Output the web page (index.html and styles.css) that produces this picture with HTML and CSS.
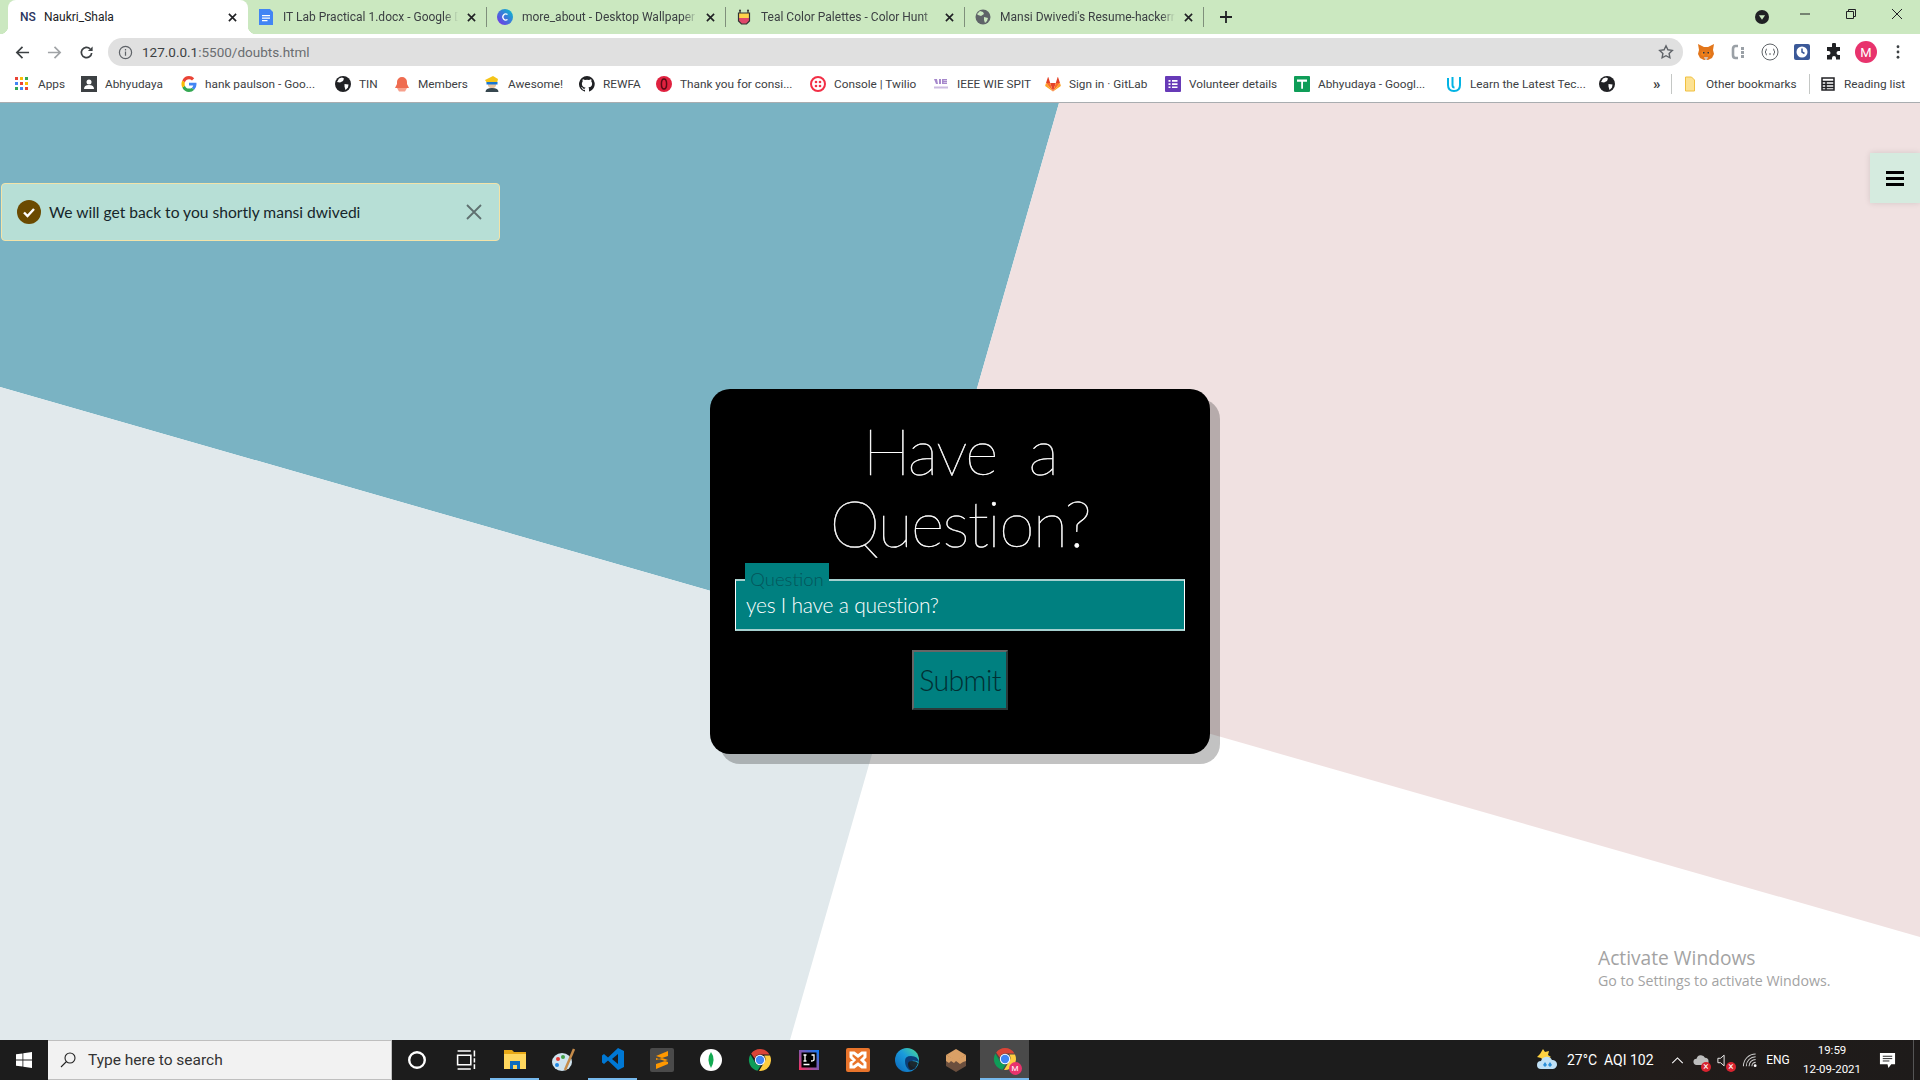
FILE: index.html
```html
<!DOCTYPE html>
<html lang="en">
<head>
<meta charset="utf-8">
<title>Naukri_Shala</title>
<link rel="stylesheet" href="styles.css">
</head>
<body>
<header class="browser">
  <div class="tabstrip">
    <div class="tab active">
      <span class="fav ns">NS</span><span class="tab-title">Naukri_Shala</span>
      <svg class="tab-x" viewBox="0 0 10 10"><path d="M1 1l8 8M9 1l-8 8"/></svg>
    </div>
    <div class="tab">
      <svg class="fav" viewBox="0 0 16 16"><path fill="#4285f4" d="M1 0h11l3 3v13H1z"/><path fill="#fff" d="M4 6h8v1.300H4zM4 8.500h8v1.300H4zM4 11h5.500v1.300H4z"/></svg>
      <span class="tab-title">IT Lab Practical 1.docx - Google D</span>
      <svg class="tab-x" viewBox="0 0 10 10"><path d="M1 1l8 8M9 1l-8 8"/></svg>
    </div>
    <div class="tab">
      <svg class="fav" viewBox="0 0 16 16"><defs><linearGradient id="cv" x1="0" y1="1" x2="1" y2="0"><stop offset="0" stop-color="#7d2ae8"/><stop offset="1" stop-color="#00c4cc"/></linearGradient></defs><circle cx="8" cy="8" r="8" fill="url(#cv)"/><path d="M10.500 5.500a3 3 0 1 0 0 5" fill="none" stroke="#fff" stroke-width="1.300"/></svg>
      <span class="tab-title">more_about - Desktop Wallpaper</span>
      <svg class="tab-x" viewBox="0 0 10 10"><path d="M1 1l8 8M9 1l-8 8"/></svg>
    </div>
    <div class="tab">
      <svg class="fav" viewBox="0 0 16 16"><path fill="#ffd24a" d="M2.500 4h11v5h-11z"/><path fill="#e0486a" d="M2.500 9h11v3l-3 3h-5l-3-3z"/><path fill="none" stroke="#333" stroke-width="1.200" d="M2.500 4h11v8l-3 3h-5l-3-3zM4 4V1.500M12 4V1.500"/><circle cx="4" cy="1.500" r="1" fill="#333"/><circle cx="12" cy="1.500" r="1" fill="#333"/></svg>
      <span class="tab-title">Teal Color Palettes - Color Hunt</span>
      <svg class="tab-x" viewBox="0 0 10 10"><path d="M1 1l8 8M9 1l-8 8"/></svg>
    </div>
    <div class="tab">
      <svg class="fav" viewBox="0 0 16 16"><circle cx="8" cy="8" r="7.500" fill="#5f6368"/><path fill="#cbe8c0" d="M5 2l3 1 1 2-3 2-3-1-1-1zM9 8l4 1-1 3-2 2-1-3z"/></svg>
      <span class="tab-title">Mansi Dwivedi's Resume-hackerr</span>
      <svg class="tab-x" viewBox="0 0 10 10"><path d="M1 1l8 8M9 1l-8 8"/></svg>
    </div>
    <svg class="new-tab" viewBox="0 0 12 12"><path d="M6 0v12M0 6h12"/></svg>
    <div class="win-controls">
      <span class="win-cell caret-cell"><svg viewBox="0 0 16 16" class="caret"><circle cx="8" cy="8" r="8" fill="#202124"/><path d="M4.500 6h7L8 11z" fill="#cbe8c0"/></svg></span>
      <span class="win-cell"><svg viewBox="0 0 10 10" class="wc"><path d="M0 5h10"/></svg></span>
      <span class="win-cell"><svg viewBox="0 0 10 10" class="wc"><path d="M.5 2.500h7v7h-7zM2.500 2.500v-2h7v7h-2"/></svg></span>
      <span class="win-cell"><svg viewBox="0 0 10 10" class="wc"><path d="M0 0l10 10M10 0L0 10"/></svg></span>
    </div>
  </div>

  <div class="toolbar">
    <span class="nav-cell"><svg viewBox="0 0 16 16" class="nav-ic"><path d="M15 8H2M8 2L2 8l6 6"/></svg></span>
    <span class="nav-cell"><svg viewBox="0 0 16 16" class="nav-ic dim"><path d="M1 8h13M8 2l6 6-6 6"/></svg></span>
    <span class="nav-cell"><svg viewBox="0 0 16 16" class="nav-ic"><path d="M13.500 8.500a5.500 5.500 0 1 1-1.600-4.400"/><path class="solid" d="M14.500 1.500v5h-5z"/></svg></span>
    <div class="address">
      <svg viewBox="0 0 16 16" class="info"><circle cx="8" cy="8" r="6.500"/><path d="M8 7v4.500M8 4.300v1.500"/></svg>
      <span class="url"><span class="url-host">127.0.0.1</span>:5500/doubts.html</span>
      <svg viewBox="0 0 16 16" class="star"><path d="M8 1.800l1.900 4 4.400.6-3.200 3 .8 4.400L8 11.700l-3.900 2.100.8-4.400-3.200-3 4.400-.6z"/></svg>
    </div>
    <div class="extensions">
      <span class="ext-cell"><svg viewBox="0 0 18 18" class="ext"><path fill="#e2761b" d="M1 1l6 3h4l6-3-1 6 1 4-2 4-4 2H7l-4-2-2-4 1-4z"/><path fill="#f6851b" d="M5 8l3 2-1 3-3-1zM13 8l-3 2 1 3 3-1z"/><path fill="#233447" d="M6 9h1.500v1.500H6zM10.500 9H12v1.500h-1.500z"/><path fill="#d7c1b3" d="M7 14h4l-1 3H8z"/></svg></span>
      <span class="ext-cell"><svg viewBox="0 0 18 18" class="ext"><path fill="none" stroke="#9aa0a6" stroke-width="2.600" d="M9 3H6.500Q4 3 4 6v6q0 3 2.500 3H9"/><path fill="#9aa0a6" d="M12 4h3v3h-3zM12 8h3v3h-3zM12 12h3v3h-3z"/></svg></span>
      <span class="ext-cell"><svg viewBox="0 0 18 18" class="ext"><circle cx="9" cy="9" r="8" fill="#fff" stroke="#5f6368"/><path fill="none" stroke="#5f6368" d="M6 6q-1 0-1 1v1l-1 1 1 1v1q0 1 1 1M12 6q1 0 1 1v1l1 1-1 1v1q0 1-1 1M8 11h2"/></svg></span>
      <span class="ext-cell"><svg viewBox="0 0 18 18" class="ext"><rect x="1" y="1" width="16" height="16" rx="2" fill="#3b5998"/><circle cx="9" cy="9" r="5.500" fill="#fff"/><path d="M9 5.500V9l2.500 1.500" fill="none" stroke="#3b5998" stroke-width="1.500"/></svg></span>
      <span class="ext-cell"><svg viewBox="0 0 18 18" class="ext"><path fill="#202124" d="M7 1.500a2 2 0 0 1 4 0V4h4v4h-1.500a2 2 0 0 0 0 4H15v4.500H11V15a2 2 0 0 0-4 0v1.500H2V12h1.500a2 2 0 0 0 0-4H2V4h5z"/></svg></span>
      <span class="ext-cell"><span class="avatar">M</span></span>
      <span class="ext-cell"><svg viewBox="0 0 4 16" class="dots"><circle cx="2" cy="2" r="1.600"/><circle cx="2" cy="8" r="1.600"/><circle cx="2" cy="14" r="1.600"/></svg></span>
    </div>
  </div>

  <nav class="bookmarks">
    <a class="bm"><svg viewBox="0 0 16 16" class="bm-ic"><path fill="#ea4335" d="M1 1h3v3H1z"/><path fill="#fbbc05" d="M6 1h3v3H6z"/><path fill="#34a853" d="M11 1h3v3h-3z"/><path fill="#4285f4" d="M1 6h3v3H1z"/><path fill="#ea4335" d="M6 6h3v3H6z"/><path fill="#fbbc05" d="M11 6h3v3h-3z"/><path fill="#34a853" d="M1 11h3v3H1z"/><path fill="#4285f4" d="M6 11h3v3H6z"/><path fill="#ea4335" d="M11 11h3v3h-3z"/></svg><span>Apps</span></a>
    <a class="bm"><svg viewBox="0 0 16 16" class="bm-ic"><rect width="16" height="16" fill="#3c4043"/><circle cx="8" cy="6" r="2.500" fill="#fff"/><path fill="#fff" d="M3 13q0-4 5-4t5 4z"/></svg><span>Abhyudaya</span></a>
    <a class="bm"><svg viewBox="0 0 16 16" class="bm-ic"><path fill="#4285f4" d="M15.500 8.200q0-.8-.1-1.500H8v2.900h4.300q-.3 1.400-1.600 2.300l2.500 1.900q2.300-2.100 2.300-5.600z"/><path fill="#34a853" d="M8 16q3.200 0 5.200-2.200l-2.500-1.900q-1 .7-2.700.7-3 0-4.100-2.900L1.300 11.600Q3.400 16 8 16z"/><path fill="#fbbc05" d="M3.900 9.700Q3.400 8 3.900 6.300L1.300 4.400q-1.700 3.600 0 7.200z"/><path fill="#ea4335" d="M8 3.200q1.800 0 3 1.200l2.200-2.200Q11.200 0 8 0 3.400 0 1.300 4.400l2.600 1.900Q5 3.200 8 3.200z"/></svg><span>hank paulson - Goo...</span></a>
    <a class="bm"><svg viewBox="0 0 16 16" class="bm-ic"><use href="#globe"/></svg><span>TIN</span></a>
    <a class="bm"><svg viewBox="0 0 16 16" class="bm-ic"><path fill="#ef6c50" d="M8 1a5 5 0 0 1 5 5v2l2 4H1l2-4V6a5 5 0 0 1 5-5z"/><path fill="#f7a08c" d="M3 12h10l-2 3.500H5z"/></svg><span>Members</span></a>
    <a class="bm"><svg viewBox="0 0 16 16" class="bm-ic"><path fill="#f5c518" d="M1 4l8-4 5 3-1 4H3z"/><path fill="#e8c39e" d="M4 6h8v4l-2 2H6l-2-2z"/><path fill="#1976d2" d="M2.500 6h11v2.500h-11z"/><path fill="#37474f" d="M1.500 16q0-4 6.500-4t6.500 4z"/></svg><span>Awesome!</span></a>
    <a class="bm"><svg viewBox="0 0 16 16" class="bm-ic"><path fill="#202124" d="M8 0a8 8 0 0 0-2.500 15.600c.4.1.5-.2.500-.4v-1.400c-2.200.5-2.700-1-2.700-1-.4-.9-.9-1.200-.9-1.200-.7-.5.1-.5.1-.5.8.1 1.200.8 1.200.8.7 1.200 1.900.9 2.300.7.100-.5.300-.9.500-1.100-1.800-.2-3.600-.9-3.600-4 0-.9.300-1.600.8-2.100-.1-.2-.4-1 .1-2.100 0 0 .7-.2 2.200.8a7.500 7.500 0 0 1 4 0c1.500-1 2.200-.8 2.200-.8.400 1.100.2 1.900.1 2.100.5.600.8 1.300.8 2.100 0 3.100-1.900 3.700-3.700 3.900.3.300.6.800.6 1.500v2.200c0 .2.100.5.500.4A8 8 0 0 0 8 0z"/></svg><span>REWFA</span></a>
    <a class="bm"><svg viewBox="0 0 16 16" class="bm-ic"><circle cx="8" cy="8" r="8" fill="#e0213f"/><ellipse cx="8" cy="8" rx="2.600" ry="5" fill="none" stroke="#5a0a14" stroke-width="1.500"/></svg><span>Thank you for consi...</span></a>
    <a class="bm"><svg viewBox="0 0 16 16" class="bm-ic"><circle cx="8" cy="8" r="7" fill="none" stroke="#f22f46" stroke-width="2"/><g fill="#f22f46"><circle cx="6" cy="6" r="1.300"/><circle cx="10" cy="6" r="1.300"/><circle cx="6" cy="10" r="1.300"/><circle cx="10" cy="10" r="1.300"/></g></svg><span>Console | Twilio</span></a>
    <a class="bm"><svg viewBox="0 0 16 16" class="bm-ic"><path fill="#a688cc" d="M1 3h3l1 5H3zM6 3h2v5H6zM9 3h5v1.500h-3.500V5H14v1.300h-3.500v.4H14V8H9z"/><path fill="#cbbbe0" d="M1 10.500h14v2H1z"/></svg><span>IEEE WIE SPIT</span></a>
    <a class="bm"><svg viewBox="0 0 16 16" class="bm-ic"><path fill="#e24329" d="M8 15.500L5.200 7h5.600z"/><path fill="#fc6d26" d="M8 15.500L1 7h4.200zM8 15.500L15 7h-4.200z"/><path fill="#fca326" d="M1 7L.2 9.500q0 .5.300.7L8 15.500zM15 7l.8 2.500q0 .5-.3.700L8 15.500z"/><path fill="#e24329" d="M1 7h4.200L3.400 1.300q-.2-.4-.5 0zM15 7h-4.200l1.800-5.700q.2-.4.500 0z"/></svg><span>Sign in · GitLab</span></a>
    <a class="bm"><svg viewBox="0 0 16 16" class="bm-ic"><rect width="16" height="16" rx="1" fill="#673ab7"/><path fill="#fff" d="M3.500 4h2v1.700h-2zM7 4h5.500v1.700H7zM3.500 7.200h2v1.700h-2zM7 7.200h5.500v1.700H7zM3.500 10.400h2v1.700h-2zM7 10.400h5.500v1.700H7z"/></svg><span>Volunteer details</span></a>
    <a class="bm"><svg viewBox="0 0 16 16" class="bm-ic"><rect width="16" height="16" rx="1" fill="#0f9d58"/><path fill="#fff" d="M3 3.500h10v2.300H9v7H7.200v-7H3z"/></svg><span>Abhyudaya - Googl...</span></a>
    <a class="bm"><svg viewBox="0 0 16 16" class="bm-ic"><path fill="none" stroke="#02b3e4" stroke-width="2" d="M2 2v7q0 6 6 6t6-6V1M6.500 1v8q0 2.500 2 2.500"/></svg><span>Learn the Latest Tec...</span></a>
    <a class="bm"><svg viewBox="0 0 16 16" class="bm-ic"><use href="#globe"/></svg></a>
    <span class="bm-more">»</span>
    <a class="bm bm-other"><svg viewBox="0 0 16 16" class="bm-ic"><path fill="#fde293" stroke="#f0c040" d="M3.500 1h6l3 3v11h-9z"/></svg><span>Other bookmarks</span></a>
    <a class="bm bm-other"><svg viewBox="0 0 16 16" class="bm-ic"><path fill="none" stroke="#202124" stroke-width="1.500" d="M2 2h12v12H2zM2 5.500h12M2 8.500h12M2 11.500h12M6 5.500V14"/></svg><span>Reading list</span></a>
  </nav>
  <svg class="defs"><defs><symbol id="globe" viewBox="0 0 16 16"><circle cx="8" cy="8" r="8" fill="#202124"/><path fill="#fff" d="M4 2.500l3-1 2 1-1 2.500-3 1.500-3-.5zM9.500 8l4 .5-.5 3-2.500 2.500-1-3.500z"/></symbol></defs></svg>
</header>

<main class="page">
  <svg class="backdrop" viewBox="0 0 1920 937" preserveAspectRatio="none">
    <rect width="1920" height="937" fill="#fff"/>
    <polygon class="bg-blue" points="0,0 1059,0 903,543 0,284"/>
    <polygon class="bg-pink" points="1059,0 1920,0 1920,834 903,543"/>
    <polygon class="bg-mist" points="0,284 903,543 790,937 0,937"/>
  </svg>

  <div class="toast">
    <svg viewBox="0 0 24 24" class="toast-check"><circle cx="12" cy="12" r="12"/><path d="M7 12.500l3.500 3.500L17 9"/></svg>
    <span class="toast-text">We will get back to you shortly mansi dwivedi</span>
    <svg viewBox="0 0 16 16" class="toast-x"><path d="M1 1l14 14M15 1L1 15"/></svg>
  </div>

  <button class="menu-btn" aria-label="Menu"><span></span><span></span><span></span></button>

  <section class="card">
    <h1 class="card-title">Have a<br>Question?</h1>
    <div class="field">
      <div class="field-input">yes I have a question?</div>
      <span class="field-label">Question</span>
    </div>
    <button class="submit">Submit</button>
  </section>

  <div class="activate">
    <div class="activate-a">Activate Windows</div>
    <div class="activate-b">Go to Settings to activate Windows.</div>
  </div>
</main>

<footer class="taskbar">
  <span class="start"><svg viewBox="0 0 16 16"><path fill="#fff" d="M0 2.300L6.500 1.400v6.200H0zM7.300 1.300L16 0v7.600H7.300zM0 8.400h6.500v6.200L0 13.700zM7.300 8.400H16V16L7.300 14.700z"/></svg></span>
  <div class="search">
    <svg viewBox="0 0 16 16" class="search-ic"><circle cx="10" cy="6" r="5"/><path d="M6.500 9.500L1 15"/></svg>
    <span>Type here to search</span>
  </div>
  <div class="apps">
    <span class="app"><svg viewBox="0 0 20 20" class="tb"><circle cx="10" cy="10" r="6.500" fill="none" stroke="#fff" stroke-width="2"/></svg></span>
    <span class="app"><svg viewBox="0 0 20 20" class="tb"><path fill="none" stroke="#fff" stroke-width="1.300" d="M3 6h11v8H3zM3 2.500h11M3 17.500h11M17 2v5M17 8.500v3.500M17 13.500v4"/></svg></span>
    <span class="app running"><svg viewBox="0 0 24 24" class="tb"><path fill="#e8a917" d="M1 3h8l2 2h12v17H1z"/><path fill="#ffd75e" d="M1 7h22v15H1z"/><path fill="#0f6cbd" d="M7 14h10v8h-3v-4h-4v4H7z"/></svg></span>
    <span class="app"><svg viewBox="0 0 24 24" class="tb"><ellipse cx="10" cy="14" rx="10" ry="9" fill="#cfe3ef"/><circle cx="6" cy="11" r="2" fill="#e53935"/><circle cx="11" cy="9" r="2" fill="#43a047"/><circle cx="5" cy="17" r="2" fill="#1e88e5"/><path stroke="#c58b4a" stroke-width="2.500" d="M22 1L13 22"/></svg></span>
    <span class="app running"><svg viewBox="0 0 24 24" class="tb"><path fill="#0078d4" d="M17 1l6 3v16l-6 3-10-9.500L3 17l-2-1.500V8.500L3 7l4 3.500z"/><path fill="#1c1c1c" d="M17 7l-6 5 6 5z"/></svg></span>
    <span class="app"><svg viewBox="0 0 24 24" class="tb"><rect width="24" height="24" rx="2" fill="#4a4a4a"/><path fill="#ff9800" d="M18 3v5L6 12V8zM6 21v-5l12-4v4zM6 10l12 4v-2L6 8z"/></svg></span>
    <span class="app"><svg viewBox="0 0 24 24" class="tb"><circle cx="12" cy="12" r="11" fill="#fff"/><path fill="#13aa52" d="M12 4q5 7 0 16-5-9 0-16z"/></svg></span>
    <span class="app"><svg viewBox="0 0 24 24" class="tb"><use href="#chrome"/></svg></span>
    <span class="app"><svg viewBox="0 0 24 24" class="tb"><defs><linearGradient id="ij" x1="0" y1="1" x2="1" y2="0"><stop offset="0" stop-color="#fe315d"/><stop offset="1" stop-color="#087cfa"/></linearGradient></defs><rect x="2" y="2" width="20" height="20" fill="url(#ij)"/><rect x="4.500" y="4.500" width="15" height="15" fill="#000"/><path stroke="#fff" stroke-width="1.300" fill="none" d="M6.500 7h3M8 7v6M6.500 13h3M14.500 7h2.500v4.500q0 1.500-3 1.500M6.500 16.500h6"/></svg></span>
    <span class="app"><svg viewBox="0 0 24 24" class="tb"><rect width="24" height="24" rx="2" fill="#e9742b"/><path fill="none" stroke="#fff" stroke-width="3" d="M8 5H5v4l3 3-3 3v4h3l4-3 4 3h3v-4l-3-3 3-3V5h-3l-4 3z"/></svg></span>
    <span class="app"><svg viewBox="0 0 24 24" class="tb"><defs><linearGradient id="edge" x1="0" y1="1" x2="1" y2="0"><stop offset="0" stop-color="#0a63b8"/><stop offset=".55" stop-color="#1a9bdc"/><stop offset="1" stop-color="#4fdc8f"/></linearGradient></defs><circle cx="12" cy="12" r="12" fill="url(#edge)"/><path fill="#0b3f7a" d="M10 13q0-5 6-5 7 0 8 6-6-3-9 0-1 3 3 5 3 1 4 0-4 4-8 3-4-3-4-9z"/><path fill="#1c1c1c" d="M13 16q0-3 4-3 4 0 6 2-2 6-7 7-3-2-3-6z" opacity=".9"/></svg></span>
    <span class="app"><svg viewBox="0 0 24 24" class="tb"><path fill="#6b4f3e" d="M2 7l10 5 10-5v11l-10 6-10-6z"/><path fill="#d9a066" d="M12 1l10 6-10 6L2 7z"/><path fill="#d9a066" d="M2 7v6l3 2 2-2 3 2 2-2v-1zM22 7v6l-3 1-3 2-4-3v-1z"/></svg></span>
    <span class="app current"><span class="chrome-wrap"><svg viewBox="0 0 24 24" class="tb"><use href="#chrome"/></svg><span class="chrome-badge">M</span></span></span>
  </div>
  <svg class="defs"><defs><symbol id="chrome" viewBox="0 0 24 24"><path fill="#db4437" d="M12 1a11 11 0 0 1 9.500 5.500H12a5.500 5.500 0 0 0-5.300 3.900L3.200 5.500A11 11 0 0 1 12 1z"/><path fill="#0f9d58" d="M2.400 6.500l5 8.500a5.500 5.500 0 0 0 5.500 2.400L9.500 22.800A11 11 0 0 1 2.400 6.500z"/><path fill="#ffcd40" d="M22 7.500A11 11 0 0 1 11 23l4.800-8a5.500 5.500 0 0 0 .4-7.500z"/><circle cx="12" cy="12" r="5.200" fill="#fff"/><circle cx="12" cy="12" r="4.200" fill="#4285f4"/></symbol></defs></svg>
  <div class="tray">
    <span class="tray-cell"><svg viewBox="0 0 24 24" class="tray-weather"><path fill="#ffd23f" d="M8 1l2 3 4-1-1 4 3 2-4 2-3 2-3-3-4-1 3-3z"/><path fill="#bfe0f5" d="M6 21a4 4 0 0 1 0-8 6 6 0 0 1 11-1 4.500 4.500 0 0 1 1 9z"/><path fill="#2b8fd8" d="M10 14l2 3-2 2-2-2zM15 14l2 3-2 2-2-2z"/></svg></span>
    <span class="tray-cell tray-text tray-temp">27°C</span>
    <span class="tray-cell tray-text">AQI 102</span>
    <span class="tray-cell"><svg viewBox="0 0 14 8" class="tray-chev"><path d="M1 7l6-6 6 6"/></svg></span>
    <span class="tray-cell tray-badged"><svg viewBox="0 0 18 16" class="tray-ic"><path fill="#bdbdbd" d="M4 13a3.500 3.500 0 0 1 0-7 5 5 0 0 1 9.500-1 4 4 0 0 1 0 8z"/></svg><span class="badge-x">×</span></span>
    <span class="tray-cell tray-badged"><svg viewBox="0 0 18 16" class="tray-ic"><path fill="none" stroke="#fff" d="M1 5.500h3L8 2v12L4 10.500H1z"/></svg><span class="badge-x">×</span></span>
    <span class="tray-cell"><svg viewBox="0 0 16 16" class="tray-ic"><path fill="none" stroke="#cfcfcf" stroke-width="1.100" d="M1 14A13 13 0 0 1 14 1M4 14A10 10 0 0 1 14 4M7 14A7 7 0 0 1 14 7M10 14a4 4 0 0 1 4-4"/><circle cx="13.500" cy="13.500" r="1.500" fill="#fff"/></svg></span>
    <span class="tray-cell tray-eng">ENG</span>
    <span class="tray-clock"><span>19:59</span><span>12-09-2021</span></span>
    <span class="tray-cell"><svg viewBox="0 0 18 18" class="tray-note"><path fill="#fff" d="M1 1h16v12h-4l-3 4-1-4H1z"/><path stroke="#1c1c1c" d="M4 4.500h10M4 7h10M4 9.500h7"/></svg></span>
    <span class="tray-sep"></span>
  </div>
</footer>
</body>
</html>
```

FILE: styles.css
```css
* { box-sizing: border-box; }
html, body { height: 100%; }
body {
  margin: 0;
  display: flex;
  flex-direction: column;
  height: 100vh;
  overflow: hidden;
  font-family: Roboto, "Liberation Sans", sans-serif;
  color: #3c4043;
}
svg { display: block; flex: none; }
.defs { width: 0; height: 0; position: absolute; }

/* browser chrome */
.browser { flex: none; background: #fff; border-bottom: 1px solid #a9adb0; height: 103px; }
.tabstrip { height: 34px; background: #cbe8c0; display: flex; align-items: stretch; }
.tab {
  flex: none;
  width: 239px;
  height: 34px;
  padding: 0 11px 0 10px;
  display: flex;
  align-items: center;
  position: relative;
  font-size: 12px;
}
.tab:first-child { margin-left: 8px; }
.tab:not(.active)::after {
  content: "";
  position: absolute;
  right: 0;
  top: 7px;
  width: 1px;
  height: 20px;
  background: #7f8f7b;
}
.tab.active {
  width: 240px;
  padding-left: 12px;
  background: #fff;
  border-radius: 8px 8px 0 0;
}
.tab.active::before, .tab.active::after {
  content: "";
  position: absolute;
  bottom: 0;
  width: 8px;
  height: 8px;
}
.tab.active::before { left: -8px; background: radial-gradient(circle at 0 0, transparent 8px, #fff 8.500px); }
.tab.active::after { right: -8px; background: radial-gradient(circle at 100% 0, transparent 8px, #fff 8.500px); }
.fav { width: 16px; height: 16px; margin-right: 9px; }
.fav.ns { width: 24px; margin-right: 0; font-size: 12px; font-weight: 500; color: #2a3560; line-height: 16px; }
.tab-title {
  flex: 1;
  white-space: nowrap;
  overflow: hidden;
  color: #3c4043;
  -webkit-mask-image: linear-gradient(to right, #000 calc(100% - 14px), transparent);
  mask-image: linear-gradient(to right, #000 calc(100% - 14px), transparent);
}
.tab.active .tab-title { color: #202124; -webkit-mask-image: none; mask-image: none; }
.tab-x { width: 9px; height: 9px; margin-left: 9px; fill: none; stroke: #202124; stroke-width: 1.800; }
.new-tab { width: 12px; height: 12px; margin: 11px 0 0 16px; fill: none; stroke: #202124; stroke-width: 1.800; }
.win-controls { margin-left: auto; display: flex; }
.win-cell { width: 46px; height: 28px; display: flex; align-items: center; justify-content: center; }
.caret-cell { width: 34px; margin-right: 3px; height: 34px; }
.caret { width: 14px; height: 14px; }
.wc { width: 10px; height: 10px; fill: none; stroke: #202124; stroke-width: 1; }

.toolbar { height: 34px; display: flex; align-items: center; padding: 2px 0 0 6px; }
.nav-cell { width: 32px; height: 28px; display: flex; align-items: center; justify-content: center; }
.nav-ic { width: 15px; height: 15px; fill: none; stroke: #3c4043; stroke-width: 1.800; }
.nav-ic.dim { stroke: #a0a3a6; }
.nav-ic .solid { fill: #3c4043; stroke: none; }
.address {
  flex: 1;
  height: 28px;
  margin-left: 6px;
  border-radius: 14px;
  background: #e0e0e0;
  display: flex;
  align-items: center;
  padding: 0 9px 0 10px;
}
.info { width: 15px; height: 15px; fill: none; stroke: #5f6368; stroke-width: 1.300; }
.url { margin-left: 9px; font-size: 13.500px; color: #6a6d70; }
.url-host { color: #3c4043; }
.star { width: 16px; height: 16px; margin-left: auto; fill: none; stroke: #5f6368; stroke-width: 1.400; }
.extensions { display: flex; margin-left: 7px; padding-right: 6px; }
.ext-cell { width: 32px; height: 28px; display: flex; align-items: center; justify-content: center; }
.ext { width: 18px; height: 18px; }
.avatar {
  width: 22px; height: 22px; border-radius: 50%;
  background: #e8336d; color: #fff; font-size: 13px;
  display: flex; align-items: center; justify-content: center;
}
.dots { width: 4px; height: 14px; fill: #3c4043; }

.bookmarks {
  height: 33px;
  padding: 0 0 1px 14px;
  display: grid;
  grid-template-columns: 67px 100px 154px 59px 90px 95px 77px 154px 123px 112px 120px 129px 152px 153px 54px 18px 138px 1fr;
  align-items: center;
  font-size: 11.800px;
  color: #3c4043;
}
.bm { display: flex; align-items: center; gap: 8px; white-space: nowrap; }
.bm-ic { width: 16px; height: 16px; }
.bm-more { font-size: 15px; font-weight: 700; color: #3c4043; }
.bm-other { border-left: 1px solid #c4c7c5; padding-left: 10px; height: 20px; }

/* page */
.page {
  flex: 1;
  position: relative;
  display: flex;
  align-items: center;
  justify-content: center;
  overflow: hidden;
  min-height: 0;
}
.backdrop { position: absolute; inset: 0; width: 100%; height: 100%; }
.bg-blue { fill: #7ab3c3; }
.bg-pink { fill: #f0e1e1; }
.bg-mist { fill: #e1e9ec; }

.toast {
  position: absolute;
  left: 1px;
  top: 80px;
  width: 499px;
  height: 58px;
  background: #b7dfd6;
  border: 1px solid #f3e3a8;
  border-radius: 4px;
  display: flex;
  align-items: center;
  padding: 0 17px 0 15px;
}
.toast-check { width: 24px; height: 24px; }
.toast-check circle { fill: #6b4a00; }
.toast-check path { fill: none; stroke: #fff; stroke-width: 2.400; }
.toast-text {
  margin-left: 8px;
  font-family: Lato, sans-serif;
  font-size: 15.600px;
  font-weight: 400;
  color: #16262a;
}
.toast-x { width: 16px; height: 16px; margin-left: auto; fill: none; stroke: #5f7070; stroke-width: 1.800; }

.menu-btn {
  position: absolute;
  right: 0;
  top: 50px;
  width: 50px;
  height: 50px;
  padding: 0 16px;
  border: 0;
  background: #d5ebdf;
  box-shadow: 0 0 6px rgba(0, 0, 0, .12);
  display: flex;
  flex-direction: column;
  justify-content: center;
  gap: 3px;
}
.menu-btn span { display: block; height: 3px; background: #000; }

.card {
  position: relative;
  width: 500px;
  height: 365px;
  background: #000;
  border-radius: 20px;
  box-shadow: 10px 10px 0 rgba(0, 0, 0, .24);
  padding: 26px 25px 0;
  display: flex;
  flex-direction: column;
  align-items: stretch;
}
.card-title {
  margin: 0;
  text-align: center;
  color: #fff;
  font-family: Lato, sans-serif;
  font-size: 64px;
  font-weight: 100;
  line-height: 72px;
  letter-spacing: -1.500px;
  word-spacing: 15px;
  -webkit-text-stroke: .5px #fff;
}
.field { position: relative; margin-top: 20px; }
.field-label {
  position: absolute;
  left: 10px;
  top: -16px;
  width: 84px;
  height: 30px;
  background: #008080;
  color: #04555a;
  font-family: Lato, sans-serif;
  font-size: 18.500px;
  font-weight: 300;
  text-align: center;
  line-height: 32px;
}
.field-input {
  height: 52px;
  background: #008080;
  border-style: solid;
  border-color: #a5d0cf #fff;
  border-width: 2px 1px;
  padding: 10px 10px 0;
  color: #fff;
  font-family: Lato, sans-serif;
  font-size: 21px;
  font-weight: 300;
  line-height: 28px;
  letter-spacing: -.25px;
}
.submit {
  align-self: center;
  width: 96px;
  height: 60px;
  margin-top: 19px;
  padding: 0;
  background: #008080;
  border: 2px solid;
  border-color: #666 #2b3a3a #2b3a3a #666;
  color: #022f33;
  font-family: Lato, sans-serif;
  font-size: 28.500px;
  font-weight: 300;
  letter-spacing: -.6px;
}

.activate { position: absolute; left: 1598px; top: 842px; color: #a3a3a3; font-family: "Open Sans", sans-serif; }
.activate-a { font-size: 19.200px; line-height: 26px; }
.activate-b { font-size: 14.200px; line-height: 20px; }

/* taskbar */
.taskbar { flex: none; height: 40px; background: #1c1c1c; display: flex; position: relative; }
.start { width: 48px; display: flex; align-items: center; justify-content: center; }
.start svg { width: 16px; height: 16px; }
.search {
  width: 344px;
  background: #f2f2f2;
  border: 1px solid #bfbfbf;
  border-width: 1px 1px 1px 0;
  display: flex;
  align-items: center;
  padding-left: 12px;
  font-size: 15.500px;
  color: #333;
}
.search-ic { width: 16px; height: 16px; margin-right: 12px; fill: none; stroke: #222; stroke-width: 1.100; }
.apps { display: flex; }
.app { width: 49px; height: 40px; display: flex; align-items: center; justify-content: center; }
.tb { width: 24px; height: 24px; }
.app.running { border-bottom: 2px solid #76b9ed; }
.app.current { background: #4a4a4a; border-bottom: 2px solid #76b9ed; }
.chrome-wrap { position: relative; display: block; width: 24px; height: 24px; }
.chrome-badge {
  position: absolute; right: -5px; bottom: -4px;
  width: 13px; height: 13px; border-radius: 50%;
  background: #e8336d; color: #fff; font-size: 8px; line-height: 13px; text-align: center;
}
.tray {
  margin-left: auto;
  width: 389px;
  display: grid;
  grid-template-columns: 32px 41px 61px 24px 23px 25px 25px 32px 76px 34px 16px;
  color: #fff;
  background: linear-gradient(90deg, #1c1c1c, #211c1a 30%, #1e1b1a);
}
.tray-cell { display: flex; align-items: center; justify-content: center; position: relative; }
.tray-text { font-size: 14px; justify-content: flex-start; white-space: nowrap; }
.tray-temp { padding-left: 4px; }
.tray-weather { width: 24px; height: 24px; }
.tray-chev { width: 13px; height: 7px; fill: none; stroke: #fff; stroke-width: 1.200; }
.tray-ic { width: 16px; height: 15px; }
.badge-x {
  position: absolute; right: 1px; bottom: 8px;
  width: 10px; height: 10px; border-radius: 50%;
  background: #d8232f; color: #fff; font-size: 10px; line-height: 9px; text-align: center;
}
.tray-eng { font-size: 12px; }
.tray-clock { display: flex; flex-direction: column; align-items: center; justify-content: center; font-size: 11.500px; line-height: 19px; white-space: nowrap; }
.tray-note { width: 17px; height: 17px; }
.tray-sep { border-left: 1px solid #555; margin-left: 9px; }
```
